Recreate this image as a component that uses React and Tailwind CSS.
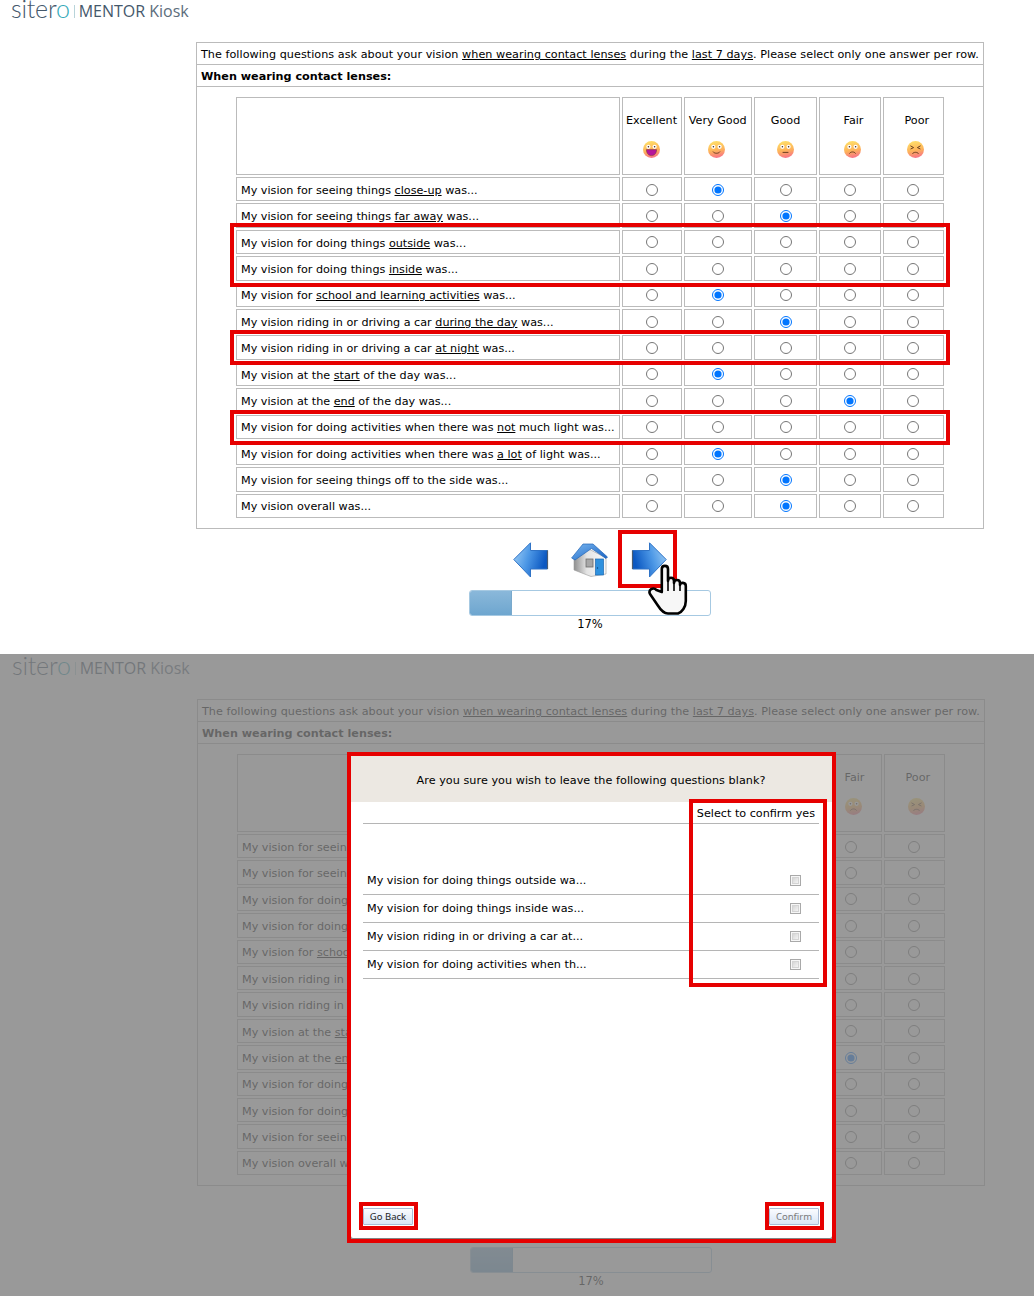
import React from "react";

const cols = [
  { name: "Excellent", face: "excellent", textPad: "", facePad: "" },
  { name: "Very Good", face: "verygood", textPad: "", facePad: "pr-[3px]" },
  { name: "Good", face: "good", textPad: "", facePad: "" },
  { name: "Fair", face: "fair", textPad: "pl-[7px]", facePad: "pl-[5px]" },
  { name: "Poor", face: "poor", textPad: "pl-[7px]", facePad: "pl-[4px]" },
];

const rows = [
  { a: "My vision for seeing things ", u: "close-up", b: " was...", sel: 1 },
  { a: "My vision for seeing things ", u: "far away", b: " was...", sel: 2 },
  { a: "My vision for doing things ", u: "outside", b: " was...", sel: -1 },
  { a: "My vision for doing things ", u: "inside", b: " was...", sel: -1 },
  { a: "My vision for ", u: "school and learning activities", b: " was...", sel: 1 },
  { a: "My vision riding in or driving a car ", u: "during the day", b: " was...", sel: 2 },
  { a: "My vision riding in or driving a car ", u: "at night", b: " was...", sel: -1 },
  { a: "My vision at the ", u: "start", b: " of the day was...", sel: 1 },
  { a: "My vision at the ", u: "end", b: " of the day was...", sel: 3 },
  { a: "My vision for doing activities when there was ", u: "not", b: " much light was...", sel: -1 },
  { a: "My vision for doing activities when there was ", u: "a lot", b: " of light was...", sel: 1 },
  { a: "My vision for seeing things off to the side was...", u: "", b: "", sel: 2 },
  { a: "My vision overall was...", u: "", b: "", sel: 2 },
];

function Face({ type, id }) {
  const gid = `face-${id}-${type}`;
  const mouth = {
    excellent: <path d="M3.4 8.6 H13.6 C13.6 12.8 11 14.6 8.5 14.6 C6 14.6 3.4 12.8 3.4 8.6Z" fill="#b5169a" stroke="#5b2a1a" strokeWidth="0.4" />,
    verygood: <path d="M5 10.6 C6.4 12.8 10.6 12.8 12 10.6" fill="none" stroke="#5b3418" strokeWidth="0.9" />,
    good: <path d="M5.6 11.4 H11.4" fill="none" stroke="#5b3418" strokeWidth="0.9" />,
    fair: <path d="M5.4 12.6 C6.6 10.4 10.4 10.4 11.6 12.6" fill="none" stroke="#5b3418" strokeWidth="0.9" />,
    poor: <path d="M5.4 12.8 C6.6 10.8 10.4 10.8 11.6 12.8" fill="none" stroke="#5b3418" strokeWidth="0.9" />,
  }[type];
  return (
    <svg width="17" height="17" viewBox="0 0 17 17">
      <defs>
        <linearGradient id={gid} x1="0.35" y1="0" x2="0.55" y2="1">
          <stop offset="0" stopColor="#ffe06a" />
          <stop offset="0.55" stopColor="#fdb35a" />
          <stop offset="1" stopColor="#f8718a" />
        </linearGradient>
      </defs>
      <circle cx="8.5" cy="8.5" r="8.5" fill={`url(#${gid})`} />
      {type === "poor" ? (
        <g fill="none" stroke="#5b3418" strokeWidth="0.9">
          <path d="M3.4 4.8 L6.6 6.6 L3.6 8" />
          <path d="M13.6 4.8 L10.4 6.6 L13.4 8" />
        </g>
      ) : (
        <g>
          <circle cx="5.4" cy="5.8" r="2.1" fill="#fff" />
          <circle cx="11.6" cy="5.8" r="2.1" fill="#fff" />
          <circle cx="5.4" cy="5.8" r="0.8" fill="#40281a" />
          <circle cx="11.6" cy="5.8" r="0.8" fill="#40281a" />
        </g>
      )}
      {mouth}
    </svg>
  );
}

function ArrowIcon({ dir, id }) {
  const gid = `arrow-${id}-${dir}`;
  return (
    <svg width="36" height="36" viewBox="0 0 36 36" className={dir === "right" ? "-scale-x-100" : ""}>
      <defs>
        <linearGradient id={gid} x1="0" y1="0" x2="1" y2="0.3">
          <stop offset="0" stopColor="#a5d2f6" />
          <stop offset="0.5" stopColor="#4d98e6" />
          <stop offset="1" stopColor="#0b58c2" />
        </linearGradient>
      </defs>
      <path d="M0.8 17.5 L17.5 0.8 V8.5 H34.5 V27 H17.5 V35 Z" fill={`url(#${gid})`} stroke="#2f73c6" strokeWidth="1" />
      <path d="M34.5 8.5 V27" stroke="#4a5c72" strokeWidth="1.2" />
    </svg>
  );
}

function HomeIcon({ id }) {
  return (
    <svg width="38" height="34" viewBox="0 0 38 34">
      <defs>
        <linearGradient id={`roof-${id}`} x1="0" y1="0" x2="1" y2="1">
          <stop offset="0" stopColor="#79b6ef" />
          <stop offset="1" stopColor="#1560c4" />
        </linearGradient>
        <linearGradient id={`wall-${id}`} x1="0" y1="0" x2="1" y2="0">
          <stop offset="0" stopColor="#8f8f8f" />
          <stop offset="0.4" stopColor="#e4e4e4" />
          <stop offset="1" stopColor="#fafafa" />
        </linearGradient>
      </defs>
      <path d="M3 14 L16 5 L35 15 V31 L20 33.5 L3 27 Z" fill={`url(#wall-${id})`} stroke="#9b9b9b" strokeWidth="0.6" />
      <path d="M0.6 15 L12 1 H22 L36.5 14 L35 15.5 L20.5 5.5 L4 17 Z" fill={`url(#roof-${id})`} stroke="#2465b4" strokeWidth="0.7" />
      <rect x="15" y="16" width="7" height="8" fill="#a7a7a7" stroke="#6d6d6d" strokeWidth="0.8" />
      <rect x="24.5" y="16" width="8" height="16" fill="#2f91de" stroke="#1c69b3" strokeWidth="0.7" />
      <circle cx="26.5" cy="25" r="0.7" fill="#0d3f77" />
    </svg>
  );
}

function Hand() {
  return (
    <svg width="42" height="52" viewBox="0 0 42 52">
      <path
        d="M14.8 28 L14.8 5 C14.8 0.8 21 0.8 21 5 L21 17 C21 12.6 27 12.6 27 17 L27 19 C27 15 33 15 33 19 L33 21 C33 18 38.8 18 38.8 22 L38.8 37 C38.8 43 35 48 31 49.5 L21 49.5 C16 49.5 13 45 10.5 41 L3 30 C1 26 6 22.5 9.5 26 Z"
        fill="#f7f7f7"
        stroke="#000"
        strokeWidth="2.6"
        strokeLinejoin="round"
      />
      <path d="M21 17 V27 M27 18 V27 M33 20 V27" stroke="#000" strokeWidth="1.6" fill="none" />
    </svg>
  );
}

function Survey({ id }) {
  return (
    <div className="font-['DejaVu_Sans',sans-serif] text-[11.2px] text-black">
      <div className="flex h-[42px] items-start pl-[11px] text-[#44586b] select-none">
        <span className="mt-[-4px] font-['Lato',sans-serif] text-[25px] leading-[24px] font-light tracking-[-0.2px]">
          <span>siter</span>
          <span className="text-[#33a9b8]">o</span>
        </span>
        <span className="ml-[4px] mt-[5px] h-[13px] w-px bg-[#b8d4da]" />
        <span className="ml-[4px] mt-[1px] font-['Open_Sans',sans-serif] text-[16px] leading-[21px] whitespace-nowrap">
          <span className="font-medium">MENTOR</span> <span className="text-[#5c6d7c]">Kiosk</span>
        </span>
      </div>

      <div className="ml-[196px] w-[788px]">
        <div className="h-[487px] border border-[#bbbbbb]">
          <div className="flex h-[22px] items-center border-b border-[#bbbbbb] pl-[4px] pt-[4px] tracking-[0.037px] whitespace-nowrap">
            <span>
              The following questions ask about your vision <u>when wearing contact lenses</u> during the <u>last 7 days</u>. Please select only one answer per row.
            </span>
          </div>
          <div className="flex h-[22px] items-center border-b border-[#bbbbbb] pl-[4px] pt-[4px] font-bold">
            When wearing contact lenses:
          </div>
          <div className="ml-[39px] mt-[10px] grid grid-cols-[383.5px_60px_68.4px_63.4px_61.4px_61.3px] auto-rows-[24.4px] grid-rows-[78px] gap-x-[2px] gap-y-[2px]">
            <div className="border border-[#bbbbbb]" />
            {cols.map((c) => (
              <div key={c.name} className="flex flex-col items-center border border-[#bbbbbb] pt-[15px]">
                <div className={`h-[16px] leading-[16px] whitespace-nowrap ${c.textPad}`}>{c.name}</div>
                <div className={`mt-[12px] ${c.facePad}`}>
                  <Face type={c.face} id={id} />
                </div>
              </div>
            ))}
            {rows.map((r, i) => (
              <React.Fragment key={i}>
                <div className="flex items-center overflow-hidden border border-[#bbbbbb] pl-[4px] pt-[4px] whitespace-nowrap">
                  <span>
                    {r.a}
                    {r.u && <u>{r.u}</u>}
                    {r.b}
                  </span>
                </div>
                {cols.map((c, j) => (
                  <div key={c.name} className="flex items-center justify-center border border-[#bbbbbb] pt-[1px]">
                    <input type="radio" name={`${id}-r${i}`} defaultChecked={r.sel === j} className="m-0 h-[12px] w-[12px]" />
                  </div>
                ))}
              </React.Fragment>
            ))}
          </div>
        </div>

        <div className="mt-[13px] flex h-[36px] items-center justify-center gap-[22px]">
          <ArrowIcon dir="left" id={id} />
          <HomeIcon id={id} />
          <ArrowIcon dir="right" id={id} />
        </div>
        <div className="mx-auto mt-[12px] flex h-[26px] w-[242px] overflow-hidden rounded-[3px] border border-[#a6c9e2]">
          <div className="h-full w-[42px] border-r border-[#79a9cc] bg-gradient-to-b from-[#8ab8da] to-[#6ea6cf]" />
        </div>
        <div className="mt-[1px] text-center text-[11.5px] leading-[14px]">17%</div>
      </div>
    </div>
  );
}

function Box({ className }) {
  return <div className={`pointer-events-none absolute border-[4px] border-[#e60000] ${className}`} />;
}

function CheckBox() {
  return (
    <span className="flex h-[11px] w-[11px] items-center justify-center border border-[#a9a9a9] bg-[#f6f6f6]">
      <span className="h-[7px] w-[7px] border border-[#d4d4d4] bg-gradient-to-br from-[#d6d6d6] to-[#f4f4f4]" />
    </span>
  );
}

function Btn({ children, dim }) {
  return (
    <button className={`flex h-[17px] w-[50px] items-center justify-center rounded-[1px] border border-[#a9bcd6] bg-gradient-to-b from-[#fbfcfe] to-[#d9e5f6] font-['Noto_Sans',sans-serif] text-[9.5px] leading-none ${dim ? "text-[#7a7a7a]" : "text-[#222222]"}`}>
      {children}
    </button>
  );
}

const blanks = [
  "My vision for doing things outside wa...",
  "My vision for doing things inside was...",
  "My vision riding in or driving a car at...",
  "My vision for doing activities when th...",
];

export default function App() {
  return (
    <div className="relative h-[1296px] w-[1034px] overflow-hidden bg-white">
      <div className="h-[654px] overflow-hidden">
        <Survey id="top" />
      </div>

      <div className="relative h-[642px] overflow-hidden pl-[1px] pt-[3px]">
        <Survey id="bottom" />
        <div className="absolute inset-0 bg-[#808080]/80" />
      </div>

      {/* modal */}
      <div className="absolute left-[351px] top-[756px] flex h-[482px] w-[481px] flex-col rounded-[2px] bg-white font-['DejaVu_Sans',sans-serif] text-[11.2px] text-black shadow-[0_0_3px_rgba(0,0,0,0.4)]">
        <div className="flex h-[46px] items-center justify-center bg-[#ece8e2] pt-[4px] pr-[1px] tracking-[0.05px]">Are you sure you wish to leave the following questions blank?</div>
        <div className="ml-[12px] mr-[13px] flex h-[22px] items-center justify-end border-b border-[#b5b5b5] pr-[4px] pt-[3px]">Select to confirm yes</div>
        <div className="ml-[12px] mr-[13px] mt-[43px]">
          {blanks.map((t) => (
            <div key={t} className="flex h-[28px] items-center justify-between border-b border-[#b5b5b5] pl-[4px] pr-[18px]">
              <span className="pt-[2px]">{t}</span>
              <CheckBox />
            </div>
          ))}
        </div>
        <div className="mt-auto flex justify-between pl-[12px] pr-[13px] pb-[13px]">
          <Btn>Go Back</Btn>
          <Btn dim>Confirm</Btn>
        </div>
      </div>

      {/* annotations */}
      <Box className="left-[230px] top-[223px] h-[64px] w-[720px]" />
      <Box className="left-[230px] top-[330px] h-[35px] w-[720px]" />
      <Box className="left-[230px] top-[410px] h-[35px] w-[720px]" />
      <Box className="left-[618px] top-[530px] h-[58px] w-[59px]" />
      <div className="pointer-events-none absolute left-[647px] top-[564px]">
        <Hand />
      </div>
      <Box className="left-[347px] top-[752px] h-[491px] w-[489px]" />
      <Box className="left-[689px] top-[799px] h-[188px] w-[138px]" />
      <Box className="left-[359px] top-[1202px] h-[28px] w-[59px]" />
      <Box className="left-[765px] top-[1202px] h-[28px] w-[59px]" />
    </div>
  );
}
